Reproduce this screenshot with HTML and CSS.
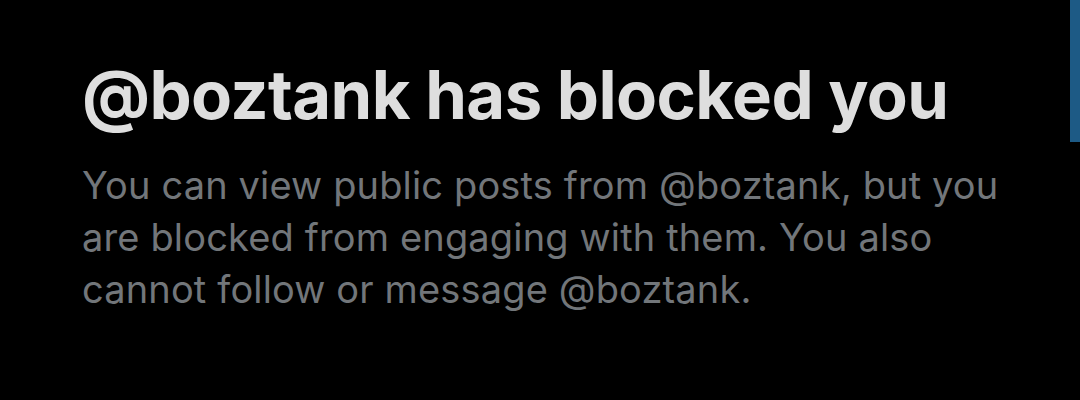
FILE: index.html
```html
<!DOCTYPE html>
<html>
<head><link rel="stylesheet" href="styles.css"></head>
<body>
<div class="page">
  <div class="content">
    <h1 class="title">@boztank has blocked you</h1>
    <p class="desc">You can view public posts from @boztank, but you are blocked from engaging with them. You also cannot follow or message @boztank.</p>
  </div>
  <div class="scrollbar"></div>
</div>
</body>
</html>
```
FILE: styles.css
```css
html, body { margin: 0; padding: 0; background: #000; }
.page { width: 1080px; height: 400px; display: flex; justify-content: space-between; align-items: flex-start; background: #000; overflow: hidden; }
.content { padding: 57px 0 0 82px; width: 935px; font-family: Inter, "Noto Sans", sans-serif; }
.title { margin: 0; color: #dedede; font-size: 67px; font-weight: 700; line-height: 76px; letter-spacing: -0.6px; white-space: nowrap; }
.desc { margin: 26px 0 0; color: #72767a; font-size: 38px; line-height: 52px; font-weight: 400; letter-spacing: 0.15px; }
.scrollbar { width: 10px; height: 142px; background: #1d5a85; }
```
